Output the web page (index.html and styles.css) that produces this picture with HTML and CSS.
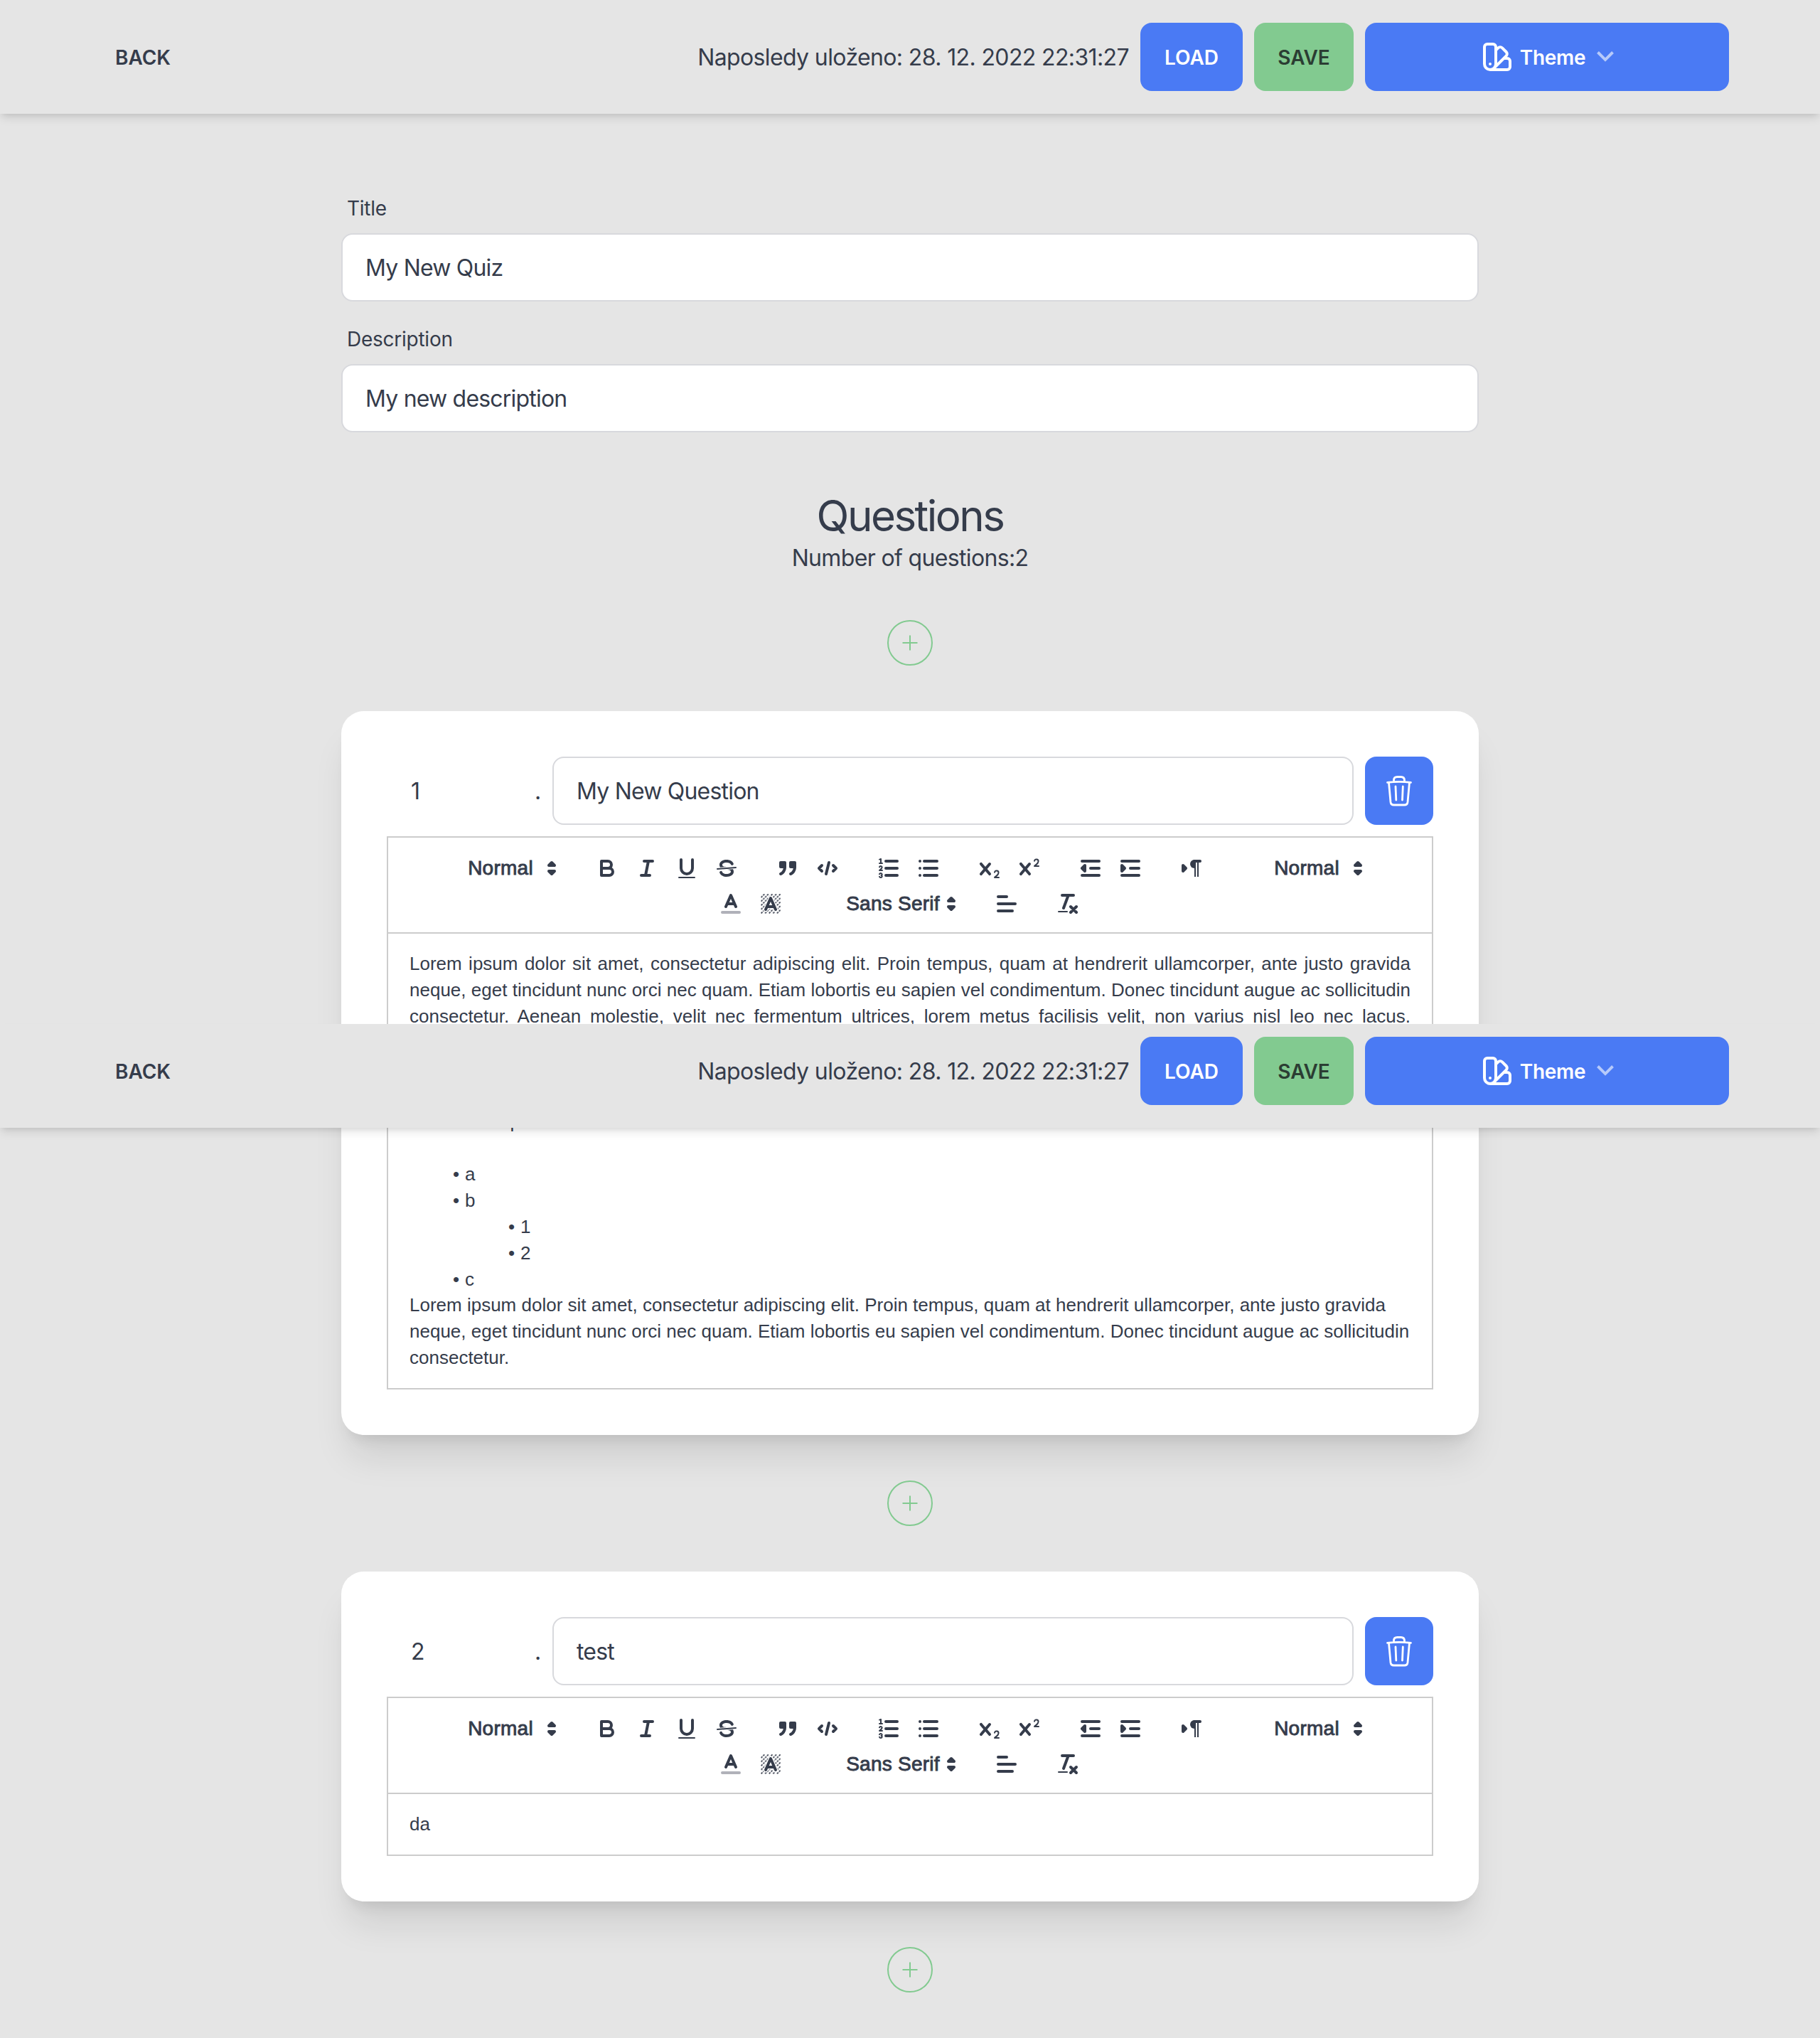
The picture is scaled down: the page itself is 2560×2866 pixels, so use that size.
FILE: index.html
```html
<!DOCTYPE html>
<html lang="cs">
<head>
<meta charset="utf-8">
<title>Quiz editor</title>
<link rel="stylesheet" href="styles.css">
</head>
<body>
<svg class="sprite" aria-hidden="true">
  <defs>
    <pattern id="hatch" x="2" y="2" width="2.8" height="2.8" patternUnits="userSpaceOnUse"><path class="hatch" d="M.3,2.5L1.2,1.6M1.7,1.1L2.6,.2"/></pattern>
    <symbol id="i-arrows" viewBox="0 0 18 18"><polygon class="st" points="7 11 9 13 11 11 7 11"/><polygon class="st" points="7 7 9 5 11 7 7 7"/></symbol>
    <symbol id="i-bold" viewBox="0 0 18 18"><path class="st" d="M5,4H9.5A2.5,2.5,0,0,1,12,6.5v0A2.5,2.5,0,0,1,9.5,9H5Z"/><path class="st" d="M5,9h5.5A2.5,2.5,0,0,1,13,11.5v0A2.5,2.5,0,0,1,10.5,14H5Z"/></symbol>
    <symbol id="i-italic" viewBox="0 0 18 18"><path class="st" d="M7,4H13M5,14H11M8,14L10,4"/></symbol>
    <symbol id="i-underline" viewBox="0 0 18 18"><path class="st" d="M5,3V9a4.012,4.012,0,0,0,4,4H9a4.012,4.012,0,0,0,4-4V3"/><rect class="fl" height="1" rx=".5" width="12" x="3" y="15"/></symbol>
    <symbol id="i-strike" viewBox="0 0 18 18"><path class="st th" d="M15.5,8.5L2.5,9.5"/><path class="fl" d="M9.007,8C6.542,7.791,6,7.519,6,6.5,6,5.792,7.283,5,9,5c1.571,0,2.765.679,2.969,1.309a1,1,0,0,0,1.9-.617C13.356,4.106,11.354,3,9,3,6.2,3,4,4.538,4,6.5a3.2,3.2,0,0,0,.5,1.843Z"/><path class="fl" d="M8.984,10C11.457,10.208,12,10.479,12,11.5c0,0.708-1.283,1.5-3,1.5-1.571,0-2.765-.679-2.969-1.309a1,1,0,1,0-1.9.617C4.644,13.894,6.646,15,9,15c2.8,0,5-1.538,5-3.5a3.2,3.2,0,0,0-.5-1.843Z"/></symbol>
    <symbol id="i-quote" viewBox="0 0 18 18"><rect class="st fl" height="3" width="3" x="4" y="5"/><rect class="st fl" height="3" width="3" x="11" y="5"/><path class="st fl" d="M7,8c0,4.031-3,5-3,5"/><path class="st fl" d="M14,8c0,4.031-3,5-3,5"/></symbol>
    <symbol id="i-code" viewBox="0 0 18 18"><path class="st" d="M5,7L3,9L5,11M13,7L15,9L13,11M10,5L8,13"/></symbol>
    <symbol id="i-ordered" viewBox="0 0 18 18"><path class="st" d="M7,4H15M7,9H15M7,14H15"/><path class="st th" d="M2.5,5.5H4.5"/><path class="fl" d="M3.5,6A0.5,0.5,0,0,1,3,5.5V3.085l-0.276.138A0.5,0.5,0,0,1,2.053,3c-0.124-.247-0.023-0.324.224-0.447l1-.5A0.5,0.5,0,0,1,4,2.5v3A0.5,0.5,0,0,1,3.5,6Z"/><path class="st th" d="M4.5,10.5h-2c0-.234,1.85-1.076,1.85-2.234A0.959,0.959,0,0,0,2.5,8.156"/><path class="st th" d="M2.5,14.846a0.959,0.959,0,0,0,1.85-.109A0.7,0.7,0,0,0,3.75,14a0.688,0.688,0,0,0,.6-0.736,0.959,0.959,0,0,0-1.85-.109"/></symbol>
    <symbol id="i-bullet" viewBox="0 0 18 18"><path class="st" d="M6,4H15M6,9H15M6,14H15M3,4H3M3,9H3M3,14H3"/></symbol>
    <symbol id="i-sub" viewBox="0 0 18 18"><path class="fl" d="M15.5,15H13.861a3.858,3.858,0,0,0,1.914-2.975,1.8,1.8,0,0,0-1.6-1.751A1.921,1.921,0,0,0,12.021,11.7a0.5,0.5,0,1,0,.957.291h0a0.914,0.914,0,0,1,1.053-.725,0.81,0.81,0,0,1,.744.762c0,1.076-1.17,1.87-1.94,2.431A1.456,1.456,0,0,0,12,15.5a0.5,0.5,0,0,0,.5.5h3A0.5,0.5,0,0,0,15.5,15Z"/><path class="fl" d="M9.65,5.241a1,1,0,0,0-1.409.108L6,7.964,3.759,5.349A1,1,0,0,0,2.192,6.592Q2.215,6.621,2.241,6.649L4.684,9.5,2.241,12.35A1,1,0,0,0,3.71,13.707q0.026-.028.049-0.057L6,11.036,8.241,13.65a1,1,0,1,0,1.567-1.243Q9.785,12.378,9.759,12.35L7.316,9.5,9.759,6.651A1,1,0,0,0,9.65,5.241Z"/></symbol>
    <symbol id="i-super" viewBox="0 0 18 18"><path class="fl" d="M15.5,7H13.861a4.015,4.015,0,0,0,1.914-2.975,1.8,1.8,0,0,0-1.6-1.751A1.922,1.922,0,0,0,12.021,3.7a0.5,0.5,0,1,0,.957.291,0.917,0.917,0,0,1,1.053-.725,0.81,0.81,0,0,1,.744.762c0,1.077-1.164,1.925-1.934,2.486A1.423,1.423,0,0,0,12,7.5a0.5,0.5,0,0,0,.5.5h3A0.5,0.5,0,0,0,15.5,7Z"/><path class="fl" d="M9.65,5.241a1,1,0,0,0-1.409.108L6,7.964,3.759,5.349A1,1,0,0,0,2.192,6.592Q2.215,6.621,2.241,6.649L4.684,9.5,2.241,12.35A1,1,0,0,0,3.71,13.707q0.026-.028.049-0.057L6,11.036,8.241,13.65a1,1,0,1,0,1.567-1.243Q9.785,12.378,9.759,12.35L7.316,9.5,9.759,6.651A1,1,0,0,0,9.65,5.241Z"/></symbol>
    <symbol id="i-outdent" viewBox="0 0 18 18"><path class="st" d="M3,14H15M3,4H15M9,9H15"/><polygon class="st fl" points="5 7 5 11 3 9 5 7"/></symbol>
    <symbol id="i-indent" viewBox="0 0 18 18"><path class="st" d="M3,14H15M3,4H15M9,9H15"/><polygon class="st fl" points="3 7 3 11 5 9 3 7"/></symbol>
    <symbol id="i-direction" viewBox="0 0 18 18"><polygon class="st fl" points="3 11 5 9 3 7 3 11"/><path class="st" d="M15,4H11"/><path class="fl" d="M11,3a3,3,0,0,0,0,6h1V3H11Z"/><rect class="fl" height="11" width="1" x="11" y="4"/><rect class="fl" height="11" width="1" x="13" y="4"/></symbol>
    <symbol id="i-color" viewBox="0 0 18 18"><path class="st faint" d="M3,15H15"/><path class="st" d="M5.5,11L9,3L12.5,11M11.63,9H6.38"/></symbol>
    <symbol id="i-background" viewBox="0 0 18 18"><rect fill="url(#hatch)" x="2" y="2" width="14" height="14"/><path class="st halo" d="M5.5,13L9,5L12.5,13M11.63,11H6.38"/><path class="st" d="M5.5,13L9,5L12.5,13M11.63,11H6.38"/></symbol>
    <symbol id="i-align" viewBox="0 0 18 18"><path class="st" d="M3,9H15M3,14H13M3,4H9"/></symbol>
    <symbol id="i-clean" viewBox="0 0 18 18"><path class="st" d="M5,3H13M6,12L9.35,3M11,11L15,15M15,11L11,15"/><rect class="fl" height="1" rx=".5" width="7" x="2" y="14"/></symbol>
    <symbol id="i-plus" viewBox="0 0 64 64"><circle cx="32" cy="32" r="31"/><path d="M21.5,32H42.5M32,21.5V42.5"/></symbol>
    <symbol id="i-trash" viewBox="0 0 48 48"><path d="M7.5,12.3Q24,10.3 40.5,12.3M16.500,11V9.500Q16.500,4.500 21.500,4.500H26.500Q31.500,4.500 31.500,9.500V11M9.500,12.5L12,40Q12.500,44 16.500,44H31.500Q35.500,44 36,40L38.500,12.5M19,18L19.800,37M29.300,18L28.500,37"/></symbol>
    <symbol id="i-swatch" viewBox="0 0 24 24"><path d="M7 21a4 4 0 01-4-4V5a2 2 0 012-2h4a2 2 0 012 2v12a4 4 0 01-4 4zm0 0h12a2 2 0 002-2v-4a2 2 0 00-2-2h-2.343M11 7.343l1.657-1.657a2 2 0 012.828 0l2.829 2.829a2 2 0 010 2.828l-8.486 8.485M7 17h.01"/></symbol>
    <symbol id="i-chevron" viewBox="0 0 2048 2048"><path d="M1799 349l242 241-1017 1017L7 590l242-241 775 775 775-775z"/></symbol>
  </defs>
</svg>

<header class="navbar">
  <a class="btn btn-ghost">BACK</a>
  <div class="actions">
    <span class="saved">Naposledy uloženo: 28. 12. 2022 22:31:27</span>
    <a class="btn btn-load">LOAD</a>
    <a class="btn btn-save">SAVE</a>
    <a class="btn btn-theme"><svg class="swatch"><use href="#i-swatch"/></svg><span class="caption">Theme</span><svg class="chevron"><use href="#i-chevron"/></svg></a>
  </div>
</header>

<main class="page">
  <div class="field"><label class="label">Title</label><div class="input">My New Quiz</div></div>
  <div class="field"><label class="label">Description</label><div class="input">My new description</div></div>

  <h1 class="heading">Questions</h1>
  <p class="count">Number of questions:2</p>

  <svg class="add"><use href="#i-plus"/></svg>

  <section class="card">
    <div class="question">
      <div class="number">1</div><span class="dot">.</span>
      <div class="input name">My New Question</div>
      <a class="btn-trash"><svg class="trash"><use href="#i-trash"/></svg></a>
    </div>
    <div class="toolbar">
      <div class="row">
        <div class="group"><div class="picker"><span>Normal</span><svg class="ic"><use href="#i-arrows"/></svg></div></div>
        <div class="group"><svg class="ic"><use href="#i-bold"/></svg><svg class="ic"><use href="#i-italic"/></svg><svg class="ic"><use href="#i-underline"/></svg><svg class="ic"><use href="#i-strike"/></svg></div>
        <div class="group"><svg class="ic"><use href="#i-quote"/></svg><svg class="ic"><use href="#i-code"/></svg></div>
        <div class="group"><svg class="ic"><use href="#i-ordered"/></svg><svg class="ic"><use href="#i-bullet"/></svg></div>
        <div class="group"><svg class="ic"><use href="#i-sub"/></svg><svg class="ic"><use href="#i-super"/></svg></div>
        <div class="group"><svg class="ic"><use href="#i-outdent"/></svg><svg class="ic"><use href="#i-indent"/></svg></div>
        <div class="group"><svg class="ic"><use href="#i-direction"/></svg></div>
        <div class="group"><div class="picker"><span>Normal</span><svg class="ic"><use href="#i-arrows"/></svg></div></div>
      </div>
      <div class="row">
        <div class="group"><svg class="ic"><use href="#i-color"/></svg><svg class="ic"><use href="#i-background"/></svg></div>
        <div class="group"><div class="picker font"><span>Sans Serif</span><svg class="ic"><use href="#i-arrows"/></svg></div></div>
        <div class="group"><svg class="ic"><use href="#i-align"/></svg></div>
        <div class="group"><svg class="ic"><use href="#i-clean"/></svg></div>
      </div>
    </div>
    <div class="editor">
      <p class="justify">Lorem ipsum dolor sit amet, consectetur adipiscing elit. Proin tempus, quam at hendrerit ullamcorper, ante justo gravida neque, eget tincidunt nunc orci nec quam. Etiam lobortis eu sapien vel condimentum. Donec tincidunt augue ac sollicitudin consectetur. Aenean molestie, velit nec fermentum ultrices, lorem metus facilisis velit, non varius nisl leo nec lacus.</p>
      <p class="covered"></p>
      <p>et rutrum turpis eu.</p>
      <p><br></p>
      <ul>
        <li>a</li>
        <li>b</li>
        <li class="nested">1</li>
        <li class="nested">2</li>
        <li>c</li>
      </ul>
      <p>Lorem ipsum dolor sit amet, consectetur adipiscing elit. Proin tempus, quam at hendrerit ullamcorper, ante justo gravida neque, eget tincidunt nunc orci nec quam. Etiam lobortis eu sapien vel condimentum. Donec tincidunt augue ac sollicitudin consectetur.</p>
    </div>
  </section>

  <svg class="add"><use href="#i-plus"/></svg>

  <section class="card">
    <div class="question">
      <div class="number">2</div><span class="dot">.</span>
      <div class="input name">test</div>
      <a class="btn-trash"><svg class="trash"><use href="#i-trash"/></svg></a>
    </div>
    <div class="toolbar">
      <div class="row">
        <div class="group"><div class="picker"><span>Normal</span><svg class="ic"><use href="#i-arrows"/></svg></div></div>
        <div class="group"><svg class="ic"><use href="#i-bold"/></svg><svg class="ic"><use href="#i-italic"/></svg><svg class="ic"><use href="#i-underline"/></svg><svg class="ic"><use href="#i-strike"/></svg></div>
        <div class="group"><svg class="ic"><use href="#i-quote"/></svg><svg class="ic"><use href="#i-code"/></svg></div>
        <div class="group"><svg class="ic"><use href="#i-ordered"/></svg><svg class="ic"><use href="#i-bullet"/></svg></div>
        <div class="group"><svg class="ic"><use href="#i-sub"/></svg><svg class="ic"><use href="#i-super"/></svg></div>
        <div class="group"><svg class="ic"><use href="#i-outdent"/></svg><svg class="ic"><use href="#i-indent"/></svg></div>
        <div class="group"><svg class="ic"><use href="#i-direction"/></svg></div>
        <div class="group"><div class="picker"><span>Normal</span><svg class="ic"><use href="#i-arrows"/></svg></div></div>
      </div>
      <div class="row">
        <div class="group"><svg class="ic"><use href="#i-color"/></svg><svg class="ic"><use href="#i-background"/></svg></div>
        <div class="group"><div class="picker font"><span>Sans Serif</span><svg class="ic"><use href="#i-arrows"/></svg></div></div>
        <div class="group"><svg class="ic"><use href="#i-align"/></svg></div>
        <div class="group"><svg class="ic"><use href="#i-clean"/></svg></div>
      </div>
    </div>
    <div class="editor"><p>da</p></div>
  </section>

  <svg class="add"><use href="#i-plus"/></svg>
</main>

<header class="navbar floating">
  <a class="btn btn-ghost">BACK</a>
  <div class="actions">
    <span class="saved">Naposledy uloženo: 28. 12. 2022 22:31:27</span>
    <a class="btn btn-load">LOAD</a>
    <a class="btn btn-save">SAVE</a>
    <a class="btn btn-theme"><svg class="swatch"><use href="#i-swatch"/></svg><span class="caption">Theme</span><svg class="chevron"><use href="#i-chevron"/></svg></a>
  </div>
</header>
</body>
</html>
```
FILE: styles.css
```css
* { box-sizing: border-box; }

body {
  position: relative;
  margin: 0;
  background: #e5e5e5;
  color: #353c4b;
  font: 32px/48px Inter, sans-serif;
}

p, h1, ul { margin: 0; padding: 0; font-weight: 400; }
.sprite { position: absolute; width: 0; height: 0; }

/* top bar */
.navbar {
  display: flex;
  align-items: center;
  justify-content: space-between;
  height: 160px;
  padding: 0 128px;
  background: #e5e5e5;
  box-shadow: 0 8px 12px -2px rgba(0, 0, 0, .1), 0 4px 8px -4px rgba(0, 0, 0, .1);
}
.floating {
  position: absolute;
  top: 1440px;
  left: 0;
  right: 0;
  height: 146px;
  align-items: flex-end;
  padding-bottom: 32px;
}
.actions { display: flex; align-items: center; gap: 16px; }
.saved { padding-top: 2px; letter-spacing: -.62px; }
.btn {
  display: flex;
  align-items: center;
  justify-content: center;
  height: 96px;
  border-radius: 16px;
  font-size: 28px;
  line-height: 28px;
  font-weight: 600;
}
.btn-ghost { padding: 1px 34px 0; }
.btn-load { width: 144px; padding-top: 1px; background: #4a7af4; color: #fff; }
.btn-save { width: 140px; padding-top: 1px; background: #82ca90; color: #2b3d33; }
.btn-theme { width: 512px; gap: 8px; background: #4a7af4; color: #fff; letter-spacing: -.3px; }
.caption { padding-top: 1px; }
.swatch { width: 48px; height: 48px; fill: none; stroke: #fff; stroke-width: 2; stroke-linecap: round; stroke-linejoin: round; }
.chevron { width: 24px; height: 24px; margin-left: 8px; fill: #fff; opacity: .6; }

/* form */
.page { width: 1600px; margin: 0 auto; padding: 96px 0 64px; display: flex; flex-direction: column; }
.field { margin-bottom: 16px; }
.label { display: flex; align-items: center; height: 72px; padding: 1px 8px 0; font-size: 28px; line-height: 40px; letter-spacing: -.25px; }
.input {
  display: flex;
  align-items: center;
  height: 96px;
  padding: 2px 32px 0;
  background: #fff;
  border: 2px solid #d8d9dd;
  border-radius: 16px;
  letter-spacing: -.8px;
}
.heading { margin-top: 65px; font-size: 60px; line-height: 72px; letter-spacing: -2.5px; text-align: center; }
.count { margin-bottom: -1px; text-align: center; letter-spacing: -.65px; }
.add { width: 64px; height: 64px; margin: 64px auto; fill: none; stroke: #82ca90; stroke-width: 2; }
.add:last-child { margin-bottom: 0; }

/* question card */
.card {
  padding: 64px;
  background: #fff;
  border-radius: 32px;
  box-shadow: 0 40px 50px -10px rgba(0, 0, 0, .1), 0 16px 20px -12px rgba(0, 0, 0, .1);
}
.question { display: flex; align-items: center; gap: 16px; margin-bottom: 16px; }
.number { width: 192px; padding: 2px 0 0 34px; }
.dot { width: 9px; padding-top: 2px; }
.name { flex: 1; }
.btn-trash { display: flex; align-items: center; justify-content: center; width: 96px; height: 96px; border-radius: 16px; background: #4a7af4; }
.trash { width: 48px; height: 48px; fill: none; stroke: #fff; stroke-width: 2.8; stroke-linecap: round; stroke-linejoin: round; }

/* editor toolbar */
.toolbar { height: 137px; padding-top: 19px; border: 2px solid #ccc; display: flex; flex-direction: column; gap: 2px; }
.row { display: flex; flex: none; justify-content: center; height: 48px; }
.group { display: flex; align-items: center; margin-right: 30px; }
.ic { width: 36px; height: 36px; margin: 0 10px; }
.picker {
  display: flex;
  align-items: center;
  width: 196px;
  padding: 0 2px 0 18px;
  font: 28px/48px "Liberation Sans", Arial, sans-serif;
  letter-spacing: .25px;
  -webkit-text-stroke: .9px #353c4b;
}
.picker span { flex: 1; text-align: center; margin-right: -32px; }
.picker .ic { margin: 0; }
.font { width: 216px; }
.st { fill: none; stroke: #353c4b; stroke-width: 2; stroke-linecap: round; stroke-linejoin: round; }
.th { stroke-width: 1; }
.fl { fill: #353c4b; }
.faint { stroke: #b0b1b9; }
.halo { stroke: #fff; stroke-width: 3.2; }
.hatch { fill: none; stroke: #353c4b; stroke-width: .9; }

/* editor content */
.editor {
  padding: 24px 30px;
  border: 2px solid #ccc;
  border-top: 0;
  font: 26px/36.92px "Liberation Sans", Arial, sans-serif;
}
.justify { text-align: justify; text-align-last: justify; }
.justify + .covered { height: 111.6px; }
.editor ul { margin-bottom: -.84px; padding-left: 39px; list-style: none; }
.editor li { padding-left: 39px; }
.editor li.nested { padding-left: 117px; }
.editor li::before { content: "\2022"; display: inline-block; width: 31.2px; margin-left: -39px; margin-right: 7.8px; text-align: right; }
```
